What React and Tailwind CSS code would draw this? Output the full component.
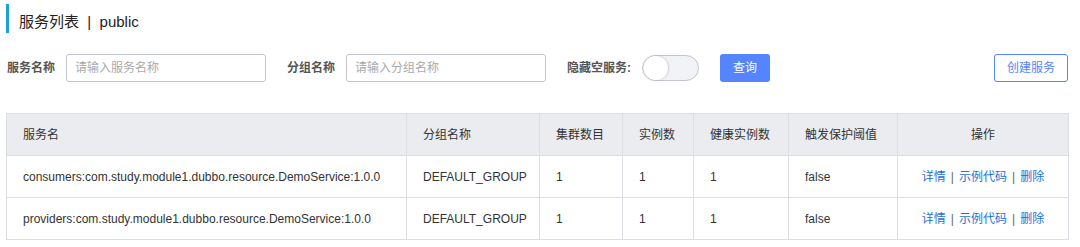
import React from "react";

const font = { fontFamily: '"Liberation Sans", "Noto Sans CJK SC", sans-serif' };

const rows = [
  "consumers:com.study.module1.dubbo.resource.DemoService:1.0.0",
  "providers:com.study.module1.dubbo.resource.DemoService:1.0.0",
];

function Cell({ children, className = "" }) {
  return (
    <td className={"h-[42px] border border-[#dcdee3] px-4 text-[12px] text-[#333] " + className}>
      {children}
    </td>
  );
}

function Th({ children, center = false }) {
  return (
    <th
      className={
        "h-[42px] border border-[#dcdee3] px-4 text-[12px] font-normal text-[#333] " +
        (center ? "text-center" : "text-left")
      }
    >
      {children}
    </th>
  );
}

export default function App() {
  return (
    <div className="w-[1080px] h-[247px] bg-white overflow-hidden" style={font}>
      <div className="pt-[4px] pl-[6px]">
        <div className="flex h-[29px] items-center border-l-[3px] border-[#1ea0d4] pl-[10px] pt-[8px] text-[15px] text-[#222]">
          服务列表 &nbsp;|&nbsp; public
        </div>
      </div>

      <div className="mt-[21px] flex items-center pl-[7px]">
        <span className="w-[59px] text-[12px] font-bold text-[#555]">服务名称</span>
        <input
          className="h-[28px] w-[200px] rounded-[3px] border border-[#c4c6cf] px-2 text-[12px] outline-none placeholder:text-[#aaa]"
          placeholder="请输入服务名称"
        />
        <span className="ml-[21px] w-[59px] text-[12px] font-bold text-[#555]">分组名称</span>
        <input
          className="h-[28px] w-[200px] rounded-[3px] border border-[#c4c6cf] px-2 text-[12px] outline-none placeholder:text-[#aaa]"
          placeholder="请输入分组名称"
        />
        <span className="ml-[21px] w-[75px] text-[12px] font-bold text-[#555]">隐藏空服务:</span>
        <div className="flex h-[26px] w-[57px] items-center rounded-full border border-[#c4c6cf] bg-[#f2f3f7] px-[1px]">
          <div className="h-[24px] w-[24px] rounded-full bg-white shadow-[1px_0_2px_rgba(0,0,0,0.15)]" />
        </div>
        <button className="ml-[21px] h-[28px] w-[50px] rounded-[3px] bg-[#5584ff] text-[12px] text-white">
          查询
        </button>
        <div className="flex-1" />
        <button className="mr-[12px] h-[28px] w-[74px] rounded-[3px] border border-[#5584ff] bg-white text-[12px] text-[#5584ff]">
          创建服务
        </button>
      </div>

      <div className="mt-[31px] pl-[6px]">
        <table className="w-[1062px] border-collapse table-fixed">
          <colgroup>
            <col className="w-[400px]" />
            <col className="w-[133px]" />
            <col className="w-[83px]" />
            <col className="w-[71px]" />
            <col className="w-[95px]" />
            <col className="w-[109px]" />
            <col className="w-[171px]" />
          </colgroup>
          <thead>
            <tr className="bg-[#ebecf0]">
              <Th>服务名</Th>
              <Th>分组名称</Th>
              <Th>集群数目</Th>
              <Th>实例数</Th>
              <Th>健康实例数</Th>
              <Th>触发保护阈值</Th>
              <Th center>操作</Th>
            </tr>
          </thead>
          <tbody>
            {rows.map((r) => (
              <tr key={r}>
                <Cell>{r}</Cell>
                <Cell>DEFAULT_GROUP</Cell>
                <Cell>1</Cell>
                <Cell>1</Cell>
                <Cell>1</Cell>
                <Cell>false</Cell>
                <Cell className="text-center">
                  <span className="text-[#1f6fd6]">详情</span>
                  <span className="mx-[5px] text-[#666]">|</span>
                  <span className="text-[#1f6fd6]">示例代码</span>
                  <span className="mx-[5px] text-[#666]">|</span>
                  <span className="text-[#1f6fd6]">删除</span>
                </Cell>
              </tr>
            ))}
          </tbody>
        </table>
      </div>
    </div>
  );
}
